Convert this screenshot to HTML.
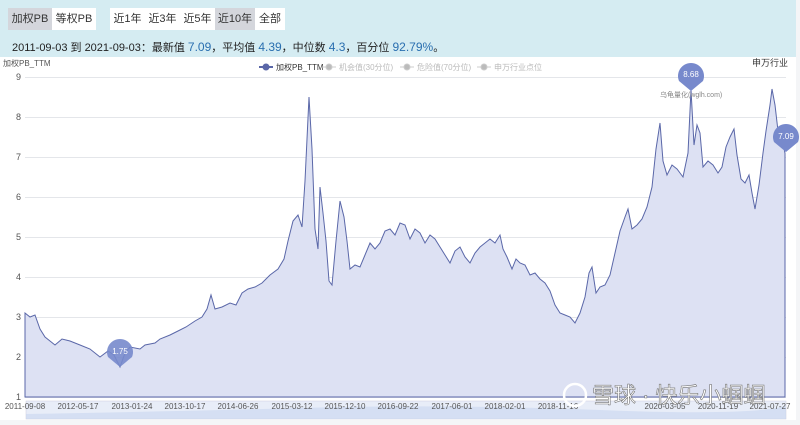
<!DOCTYPE html><html><head><meta charset="utf-8"><style>
body{margin:0;width:800px;height:425px;background:#f4f5f7;font-family:"Liberation Sans","Noto Sans CJK SC",sans-serif;overflow:hidden;position:relative}
.top{position:absolute;left:0;top:0;width:796px;height:57px;background:#d5ecf2}
.b{position:absolute;top:8px;height:22px;line-height:22px;font-size:11px;color:#333;text-align:center}
.info{position:absolute;left:12px;top:39px;font-size:11px;color:#222}
.info span{color:#2a6fb0;font-size:12px}
.chart{position:absolute;left:0;top:57px;width:796px;height:363px;background:#fff}
</style></head><body>
<div class="top">
<div class="b" style="left:8px;width:44px;background:#d4d6dc">加权PB</div>
<div class="b" style="left:52px;width:44px;background:#fff">等权PB</div>
<div class="b" style="left:110px;width:175px;background:#fff"></div>
<div class="b" style="left:110px;width:35px">近1年</div>
<div class="b" style="left:145px;width:35px">近3年</div>
<div class="b" style="left:180px;width:35px">近5年</div>
<div class="b" style="left:215px;width:40px;background:#d4d6dc">近10年</div>
<div class="b" style="left:255px;width:30px">全部</div>
<div class="info">2011-09-03 到 2021-09-03：最新值 <span>7.09</span>，平均值 <span>4.39</span>，中位数 <span>4.3</span>，百分位 <span>92.79%</span>。</div>
</div>
<div class="chart"></div>
<svg width="800" height="425" style="position:absolute;left:0;top:0" font-family="Liberation Sans,Noto Sans CJK SC,sans-serif">
<g stroke="#e4e6ea" stroke-width="1">
<line x1="25" x2="786" y1="77.5" y2="77.5"/><line x1="25" x2="786" y1="117.5" y2="117.5"/><line x1="25" x2="786" y1="157.5" y2="157.5"/><line x1="25" x2="786" y1="197.5" y2="197.5"/><line x1="25" x2="786" y1="237.5" y2="237.5"/><line x1="25" x2="786" y1="277.5" y2="277.5"/><line x1="25" x2="786" y1="317.5" y2="317.5"/><line x1="25" x2="786" y1="357.5" y2="357.5"/><line x1="25" x2="786" y1="397.5" y2="397.5"/>
</g>
<g transform="matrix(1,0,0,-40,0,437)">
<path fill="#dde1f3" stroke="#5a67a8" vector-effect="non-scaling-stroke" stroke-width="1" d="M25,3.1 L30,3.0 35,3.05 40,2.7 45,2.5 50,2.4 55,2.3 62,2.45 70,2.4 80,2.3 90,2.2 100,2.0 108,2.15 114,2.05 120,1.75 125,2.1 130,2.25 140,2.2 145,2.3 155,2.35 160,2.45 170,2.55 178,2.65 186,2.75 195,2.9 202,3.0 207,3.2 211,3.55 215,3.2 222,3.25 230,3.35 236,3.3 242,3.6 248,3.7 255,3.75 262,3.85 270,4.05 278,4.2 284,4.45 288,4.9 293,5.4 298,5.55 302,5.25 305,6.4 309,8.5 312,7.2 315,5.2 318,4.7 320,6.25 323,5.6 326,4.9 329,3.9 332,3.8 336,4.9 340,5.9 344,5.5 347,4.9 350,4.2 355,4.3 360,4.25 365,4.55 370,4.85 375,4.7 380,4.85 385,5.15 390,5.2 395,5.05 400,5.35 405,5.3 410,4.95 415,5.2 420,5.1 425,4.85 430,5.05 435,4.95 440,4.75 445,4.55 450,4.35 455,4.65 460,4.75 465,4.5 470,4.35 475,4.6 480,4.75 485,4.85 490,4.95 495,4.85 500,5.05 503,4.7 507,4.5 512,4.2 516,4.45 520,4.35 525,4.3 530,4.05 535,4.1 540,3.95 545,3.85 550,3.65 555,3.3 560,3.1 565,3.05 570,3.0 575,2.85 580,3.1 585,3.5 589,4.1 592,4.25 596,3.6 600,3.75 605,3.8 610,4.05 615,4.6 620,5.15 625,5.5 628,5.7 632,5.2 637,5.3 642,5.45 647,5.75 652,6.25 656,7.2 660,7.85 663,6.9 667,6.55 672,6.8 677,6.7 683,6.5 688,7.1 691,8.68 694,7.3 697,7.8 700,7.6 703,6.75 708,6.9 713,6.8 718,6.6 722,6.75 726,7.25 730,7.5 734,7.7 737,7.05 741,6.45 745,6.35 749,6.55 752,6.1 755,5.7 759,6.3 763,7.1 766,7.65 770,8.3 772,8.7 775,8.3 778,7.65 782,7.5 785,7.09 L785,1 25,1 Z"/>
</g>
<path d="M120,367 l-12,-10 a13,13 0 1,1 24,0 Z" fill="#7789cc" opacity=".9"/>
<text x="120" y="354" font-size="8" fill="#fff" text-anchor="middle">1.75</text>
<path d="M691,91 l-12,-10 a13,13 0 1,1 24,0 Z" fill="#7789cc"/>
<text x="691" y="77" font-size="8" fill="#fff" text-anchor="middle">8.68</text>
<path d="M786,152 l-12,-10 a13,13 0 1,1 24,0 Z" fill="#7789cc"/>
<text x="786" y="139" font-size="8" fill="#fff" text-anchor="middle">7.09</text>
<text x="660" y="97" font-size="7" fill="#888">乌龟量化(wglh.com)</text>
<g font-size="9" fill="#555" text-anchor="end"><text x="21" y="80">9</text><text x="21" y="120">8</text><text x="21" y="160">7</text><text x="21" y="200">6</text><text x="21" y="240">5</text><text x="21" y="280">4</text><text x="21" y="320">3</text><text x="21" y="360">2</text><text x="21" y="400">1</text></g>
<text x="3" y="66" font-size="8" fill="#555">加权PB_TTM</text>
<text x="752" y="66" font-size="9" fill="#333">申万行业</text>
<g font-size="8"><line x1="259" x2="273" y1="67" y2="67" stroke="#5a67a8" stroke-width="2"/><circle cx="266" cy="67" r="3.5" fill="#5a67a8"/><text x="276" y="70" fill="#333">加权PB_TTM</text>
<g fill="#bbb" stroke="#ccc"><line x1="322" x2="336" y1="67" y2="67"/><circle cx="329" cy="67" r="3"/><line x1="400" x2="414" y1="67" y2="67"/><circle cx="407" cy="67" r="3"/><line x1="477" x2="491" y1="67" y2="67"/><circle cx="484" cy="67" r="3"/></g>
<g fill="#bbb"><text x="339" y="70">机会值(30分位)</text><text x="417" y="70">危险值(70分位)</text><text x="494" y="70">申万行业点位</text></g></g>
<rect x="26" y="401" width="760" height="18" fill="#e8edf8" stroke="#ccd" stroke-width=".5"/>
<path d="M26,414 Q150,412 300,408 T600,410 T786,406 L786,419 26,419Z" fill="#c8d6f0" opacity=".6"/>
<g font-size="8" fill="#555" text-anchor="middle"><text x="25" y="409">2011-09-08</text><text x="78" y="409">2012-05-17</text><text x="132" y="409">2013-01-24</text><text x="185" y="409">2013-10-17</text><text x="238" y="409">2014-06-26</text><text x="292" y="409">2015-03-12</text><text x="345" y="409">2015-12-10</text><text x="398" y="409">2016-09-22</text><text x="452" y="409">2017-06-01</text><text x="505" y="409">2018-02-01</text><text x="558" y="409">2018-11-16</text><text x="665" y="409">2020-03-05</text><text x="718" y="409">2020-11-19</text><text x="770" y="409">2021-07-27</text></g>
<g fill="#fff" stroke="#666" stroke-width=".6" font-size="22"><circle cx="575" cy="395" r="11" fill="none" stroke="#fff" stroke-width="2.5"/><text x="592" y="403" stroke="#777">雪球 · 快乐小蝈蝈</text></g>
</svg>
</body></html>
